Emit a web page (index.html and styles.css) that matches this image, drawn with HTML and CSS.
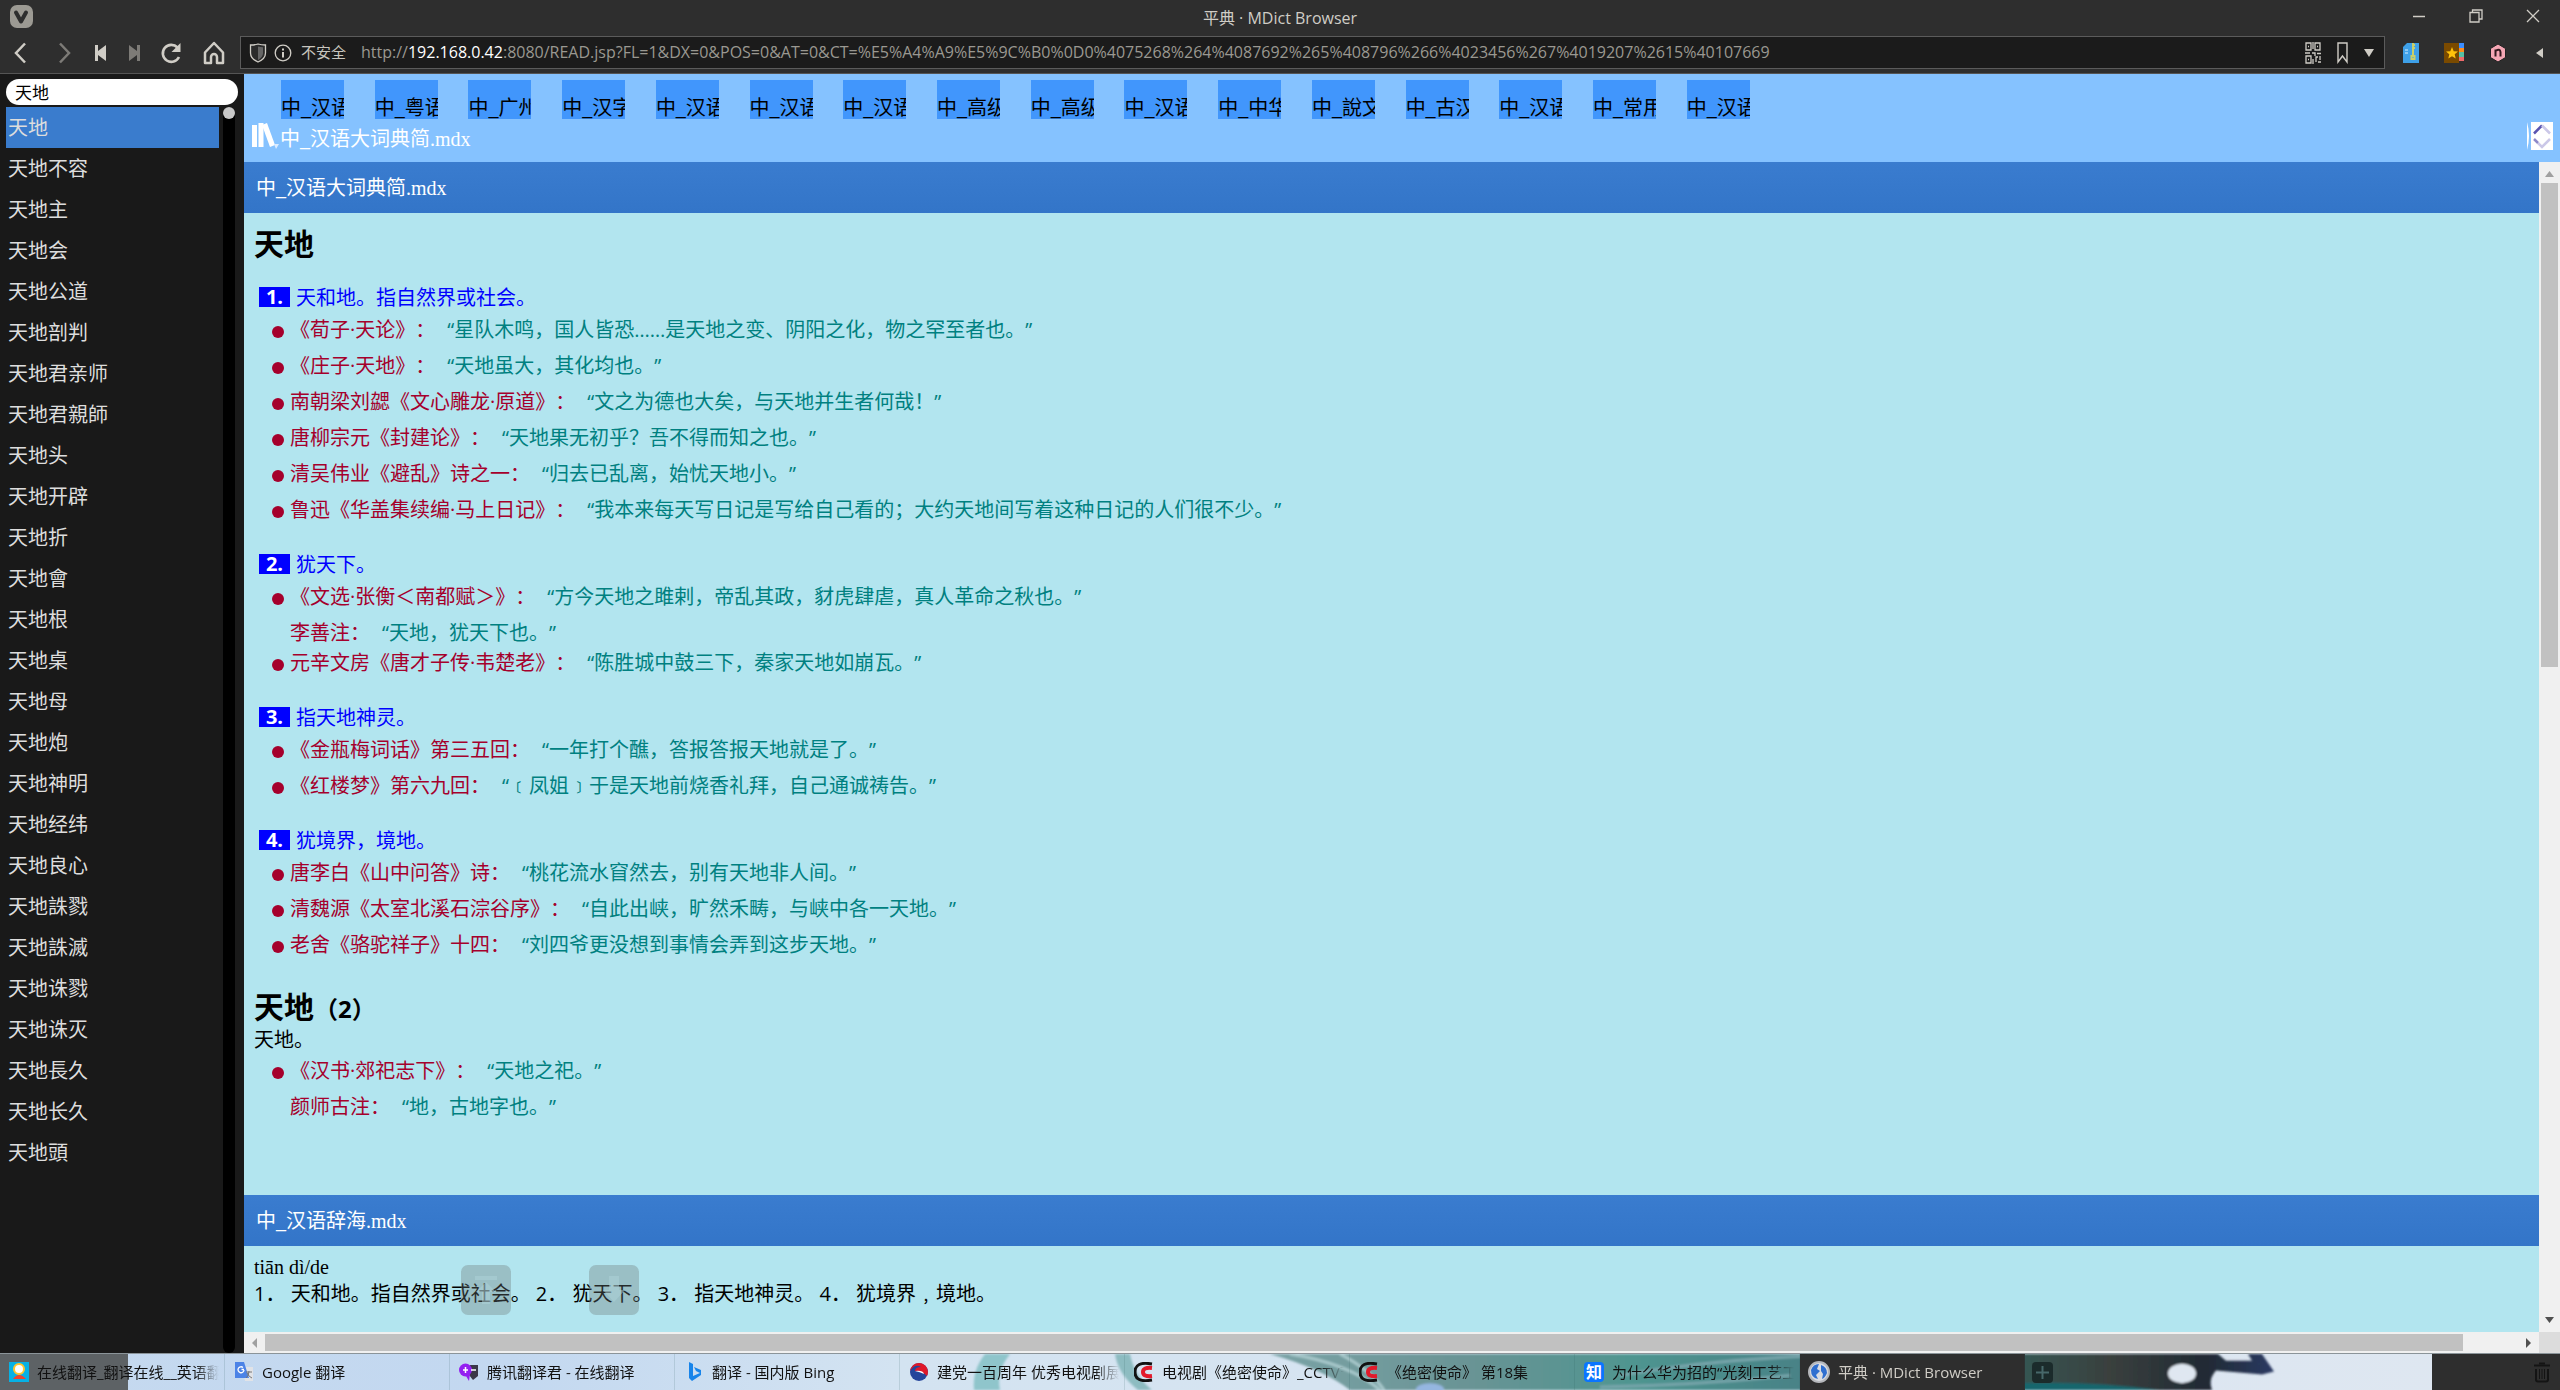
FILE: index.html
```html
<!DOCTYPE html>
<html lang="zh-CN">
<head>
<meta charset="utf-8">
<title>平典 · MDict Browser</title>
<link rel="stylesheet" href="styles.css">
</head>
<body>
<header class="titlebar">
  <button class="plain" aria-label="菜单"><svg width="23" height="23" viewBox="0 0 23 23"><rect width="23" height="23" rx="7" fill="#9c9a93"/><path d="M6 7.500l5 9 5-9" fill="none" stroke="#2e2e2e" stroke-width="4" stroke-linecap="round" stroke-linejoin="round"/></svg></button>
  <h1 class="window-title">平典 · MDict Browser</h1>
  <div class="window-buttons">
    <button class="plain" aria-label="最小化"><svg width="14" height="14" viewBox="0 0 14 14"><path d="M1 7.500h12" stroke="#d0cdc6" stroke-width="1.500"/></svg></button>
    <button class="plain" aria-label="还原"><svg width="14" height="14" viewBox="0 0 14 14" fill="none" stroke="#d0cdc6" stroke-width="1.300"><path d="M1 3.500h9v9.500H1zM3.500 3.500V1H13v9h-3"/></svg></button>
    <button class="plain" aria-label="关闭"><svg width="14" height="14" viewBox="0 0 14 14"><path d="M1 1l12 12M13 1L1 13" stroke="#d0cdc6" stroke-width="1.300"/></svg></button>
  </div>
</header>
<div class="toolbar">
  <nav class="nav-buttons">
    <button class="plain" aria-label="后退"><svg width="24" height="24" viewBox="0 0 24 24"><path d="M16 2.500L7 12l9 9.500" fill="none" stroke="#d0cdc6" stroke-width="2.500"/></svg></button>
    <button class="plain" aria-label="前进"><svg width="24" height="24" viewBox="0 0 24 24"><path d="M8 2.500L17 12l-9 9.500" fill="none" stroke="#7d7b77" stroke-width="2.500"/></svg></button>
    <button class="plain" aria-label="快退"><svg width="24" height="24" viewBox="0 0 24 24" fill="#d0cdc6"><path d="M6 4h3v6l8-6v16l-8-6v6H6z"/></svg></button>
    <button class="plain" aria-label="快进"><svg width="24" height="24" viewBox="0 0 24 24" fill="#7d7b77"><path d="M18 4h-3v6L7 4v16l8-6v6h3z"/></svg></button>
    <button class="plain" aria-label="重新加载"><svg width="24" height="24" viewBox="0 0 24 24"><path d="M18.500 6.500A8.500 8.500 0 1 0 20 16" fill="none" stroke="#d0cdc6" stroke-width="2.600"/><path d="M21.500 2v9h-9z" fill="#d0cdc6"/></svg></button>
    <button class="plain" aria-label="主页"><svg width="24" height="24" viewBox="0 0 24 24"><path d="M3 11.500L12 2l9 9.500V22h-6v-6a3 3 0 0 0-6 0v6H3z" fill="none" stroke="#d0cdc6" stroke-width="2.500" stroke-linejoin="round"/></svg></button>
  </nav>
  <div class="address">
    <svg width="18" height="20" viewBox="0 0 18 20"><path d="M1.500 2q4 0 7.500-1 3.500 1 7.500 1v8c0 5-4 7.500-7.500 9-3.500-1.500-7.500-4-7.500-9z" fill="#2b2b2b" stroke="#d0cdc6" stroke-width="1.300"/><path d="M9 3.500q2.500.7 5 .8V10c0 3.500-2.500 5.500-5 7z" fill="#666"/></svg>
    <svg width="18" height="18" viewBox="0 0 18 18"><circle cx="9" cy="9" r="7.800" fill="none" stroke="#d0cdc6" stroke-width="1.300"/><path d="M9 8v5.500M9 4.500v2" stroke="#d0cdc6" stroke-width="2"/></svg>
    <span class="insecure">不安全</span>
    <div class="url" role="textbox" aria-label="地址" contenteditable="true" spellcheck="false">http://<span class="host">192.168.0.42</span>:8080/READ.jsp?FL=1&amp;DX=0&amp;POS=0&amp;AT=0&amp;CT=%E5%A4%A9%E5%9C%B0%0D0%4075268%264%4087692%265%408796%266%4023456%267%4019207%2615%40107669</div>
    <div class="address-tools">
      <button class="plain" aria-label="二维码"><svg width="16" height="22" viewBox="0 0 16 22" fill="none" stroke="#d0cdc6" stroke-width="1.300"><path d="M1 1h5v7H1zM10 1h5v7h-5zM1 14h5v7H1zM3 4.500h1M12 4.500h1M3 17.500h1M8 0v7M0 11h5M7 11h3v3M12 11.500h4M8 17v5M11 20v-5h2M15 14v4M13 20h3"/></svg></button>
      <button class="plain" aria-label="书签"><svg width="11" height="22" viewBox="0 0 11 22"><path d="M1 1h9v19l-4.500-6L1 20z" fill="none" stroke="#d0cdc6" stroke-width="1.400"/></svg></button>
      <button class="plain" aria-label="历史"><svg width="10" height="8" viewBox="0 0 10 8"><path d="M0 0h10L5 8z" fill="#d0cdc6"/></svg></button>
    </div>
  </div>
  <div class="extensions">
    <button class="plain" aria-label="压缩"><svg width="16" height="20" viewBox="0 0 16 20"><path d="M4 0h12v20H0V4z" fill="#3ea0e8"/><path d="M10 0v14M9 2h3M9 5h3M8.500 13h3v3h-3z" stroke="#c9cf68" stroke-width="2" fill="none"/><path d="M2 7h3M2 10h3" stroke="#d9efff"/></svg></button>
    <button class="plain" aria-label="收藏"><svg width="20" height="20" viewBox="0 0 20 20"><path d="M0 0h15v20H0z" fill="#7a4a00"/><path d="M8 4l1.700 4.200 4.300.3-3.300 2.800 1 4.300L8 13.200l-3.700 2.400 1-4.300L2 8.500l4.300-.3z" fill="#ffc20a"/><path d="M15 0h5v5h-5z" fill="#3a8dff"/><path d="M15 5h5v4h-5z" fill="#ff8b1a"/><path d="M15 9h5v5h-5z" fill="#57c1a5"/><path d="M15 14h5v4h-5z" fill="#ef6a6a"/></svg></button>
    <button class="plain" aria-label="笔记"><svg width="18" height="20" viewBox="0 0 18 20"><path d="M9 1l7.500 4.500v9L9 19l-7.500-4.500v-9z" fill="#f5a6b4" stroke="#202020"/><path d="M6.500 13.500v-7M6.500 8q4.500-3 5 1v4.500" fill="none" stroke="#33191e" stroke-width="2"/></svg></button>
    <button class="plain more" aria-label="展开扩展"><svg width="7" height="10" viewBox="0 0 7 10"><path d="M7 0v10L0 5z" fill="#d0cdc6"/></svg></button>
  </div>
</div>
<main class="page">
  <aside class="sidebar">
    <input class="search" type="text" value="天地" aria-label="查词">
    <div class="word-area">
      <nav class="words">
        <a class="current" href="#">天地</a><a href="#">天地不容</a><a href="#">天地主</a><a href="#">天地会</a><a href="#">天地公道</a><a href="#">天地剖判</a><a href="#">天地君亲师</a><a href="#">天地君親師</a><a href="#">天地头</a><a href="#">天地开辟</a><a href="#">天地折</a><a href="#">天地會</a><a href="#">天地根</a><a href="#">天地桌</a><a href="#">天地母</a><a href="#">天地炮</a><a href="#">天地神明</a><a href="#">天地经纬</a><a href="#">天地良心</a><a href="#">天地誅戮</a><a href="#">天地誅滅</a><a href="#">天地诛戮</a><a href="#">天地诛灭</a><a href="#">天地長久</a><a href="#">天地长久</a><a href="#">天地頭</a>
      </nav>
      <div class="word-track"><div class="word-thumb"></div></div>
    </div>
  </aside>
  <section class="reader">
    <header class="dict-head">
      <div class="dict-list">
        <button>中_汉语</button><button>中_粤语</button><button>中_广州</button><button>中_汉字</button><button>中_汉语</button><button>中_汉语</button><button>中_汉语</button><button>中_高级</button><button>中_高级</button><button>中_汉语</button><button>中_中华</button><button>中_說文</button><button>中_古汉</button><button>中_汉语</button><button>中_常用</button><button>中_汉语</button>
      </div>
      <div class="dict-current">
        <svg width="28" height="28" viewBox="0 0 28 28"><path d="M0 3h5v22H0zM6.500 1h5v24h-5z" fill="#fff"/><path d="M10 3l5-2 8 22-5 2z" fill="#fff"/><path d="M22 22h5l-3 5z" fill="#dcecff"/></svg>
        <span class="dict-name">中_汉语大词典简.mdx</span>
        <button class="plain" aria-label="上下切换"><svg width="28" height="28" viewBox="0 0 28 28"><path d="M1 0q4 14 0 28z" fill="#fff"/><path d="M5 0h22v28H5z" fill="#fff"/><path d="M8 11.500l8-8" stroke="#5a54b0" stroke-width="2.500"/><path d="M16 3.500l8 8M12 21l4 4 8-8" fill="none" stroke="#cbc8e8" stroke-width="2.500"/><path d="M8 17l4 4" stroke="#8d88c8" stroke-width="2.500"/></svg></button>
      </div>
    </header>
    <div class="view">
      <div class="entries">
        <h2 class="bar">中_汉语大词典简.mdx</h2>
        <article class="entry">
          <h3 class="word">天地</h3>
          <section class="sense">
            <p class="meaning"><b>1.</b>天和地。指自然界或社会。</p>
            <ul>
              <li>《荀子·天论》：<q>“星队木鸣，国人皆恐……是天地之变、阴阳之化，物之罕至者也。”</q></li>
              <li>《庄子·天地》：<q>“天地虽大，其化均也。”</q></li>
              <li>南朝梁刘勰《文心雕龙·原道》：<q>“文之为德也大矣，与天地并生者何哉！”</q></li>
              <li>唐柳宗元《封建论》：<q>“天地果无初乎？吾不得而知之也。”</q></li>
              <li>清吴伟业《避乱》诗之一：<q>“归去已乱离，始忧天地小。”</q></li>
              <li>鲁迅《华盖集续编·马上日记》：<q>“我本来每天写日记是写给自己看的；大约天地间写着这种日记的人们很不少。”</q></li>
            </ul>
          </section>
          <section class="sense">
            <p class="meaning"><b>2.</b>犹天下。</p>
            <ul>
              <li>《文选·张衡＜南都赋＞》：<q>“方今天地之雎剌，帝乱其政，豺虎肆虐，真人革命之秋也。”</q></li>
              <li class="note">李善注：<q>“天地，犹天下也。”</q></li>
              <li>元辛文房《唐才子传·韦楚老》：<q>“陈胜城中鼓三下，秦家天地如崩瓦。”</q></li>
            </ul>
          </section>
          <section class="sense">
            <p class="meaning"><b>3.</b>指天地神灵。</p>
            <ul>
              <li>《金瓶梅词话》第三五回：<q>“一年打个醮，答报答报天地就是了。”</q></li>
              <li>《红楼梦》第六九回：<q>“﹝凤姐﹞于是天地前烧香礼拜，自己通诚祷告。”</q></li>
            </ul>
          </section>
          <section class="sense">
            <p class="meaning"><b>4.</b>犹境界，境地。</p>
            <ul>
              <li>唐李白《山中问答》诗：<q>“桃花流水窅然去，别有天地非人间。”</q></li>
              <li>清魏源《太室北溪石淙谷序》：<q>“自此出峡，旷然禾畴，与峡中各一天地。”</q></li>
              <li>老舍《骆驼祥子》十四：<q>“刘四爷更没想到事情会弄到这步天地。”</q></li>
            </ul>
          </section>
          <h3 class="word second">天地<small>（2）</small></h3>
          <p class="gloss">天地。</p>
          <ul>
            <li>《汉书·郊祀志下》：<q>“天地之祀。”</q></li>
            <li class="plain-note">颜师古注：<q>“地，古地字也。”</q></li>
          </ul>
        </article>
        <h2 class="bar">中_汉语辞海.mdx</h2>
        <article class="entry brief">
          <p class="pinyin">tiān dì/de</p>
          <p class="senses">1． 天和地。指自然界或社会。 2． 犹天下。 3． 指天地神灵。 4． 犹境界﹐境地。</p>
        </article>
        <div class="jump">
          <button aria-label="回到顶部"><svg width="28" height="30" viewBox="0 0 28 30" fill="#aed3da"><path d="M3 1h22v4H3zM14 7l10 10h-6v12h-8V17H4z"/></svg></button>
          <button aria-label="到底部"><svg width="28" height="30" viewBox="0 0 28 30" fill="#aed3da"><path d="M9 1h10v14h6L14 27 3 15h6z"/></svg></button>
        </div>
      </div>
      <div class="vscroll"><svg width="9" height="6" viewBox="0 0 9 6"><path d="M0 6h9L4.500 0z" fill="#a0a0a0"/></svg><div class="vthumb"></div><svg class="end" width="9" height="6" viewBox="0 0 9 6"><path d="M0 0h9L4.500 6z" fill="#505050"/></svg></div>
      <div class="hscroll"><svg width="5" height="10" viewBox="0 0 5 10"><path d="M5 0v10L0 5z" fill="#a0a0a0"/></svg><div class="hthumb"></div><svg class="end" width="5" height="10" viewBox="0 0 5 10"><path d="M0 0v10l5-5z" fill="#505050"/></svg></div>
      <div class="corner"></div>
    </div>
  </section>
</main>
<footer class="tabbar">
  <svg class="wallpaper" viewBox="0 0 2560 37" preserveAspectRatio="none">
    <defs>
      <linearGradient id="sky" x2="1" y2="0"><stop offset="0" stop-color="#c5d9ef"/><stop offset=".2" stop-color="#c3d8f0"/><stop offset=".35" stop-color="#d3e3f1"/><stop offset="1" stop-color="#dfe7f1"/></linearGradient>
      <linearGradient id="leaf" x2="1" y2="0"><stop offset="0" stop-color="#7aa3a6"/><stop offset=".35" stop-color="#6a9495"/><stop offset=".65" stop-color="#4f9590"/><stop offset="1" stop-color="#487f85"/></linearGradient>
      <linearGradient id="deep" x2="1" y2="0"><stop offset="0" stop-color="#355b58"/><stop offset=".4" stop-color="#3a403e"/><stop offset=".75" stop-color="#202a34"/><stop offset="1" stop-color="#2b3a63"/></linearGradient>
      <filter id="soft"><feGaussianBlur stdDeviation="1"/></filter>
    </defs>
    <path d="M0 0h2560v37H0z" fill="url(#sky)"/>
    <g filter="url(#soft)">
      <path d="M985 0h25q-14 18-10 37h-26q-2-20 11-37z" fill="#8fc5cb"/>
      <path d="M1115 0h15q4 22 22 37h-14q-20-16-23-37z" fill="#8dbcc1"/>
      <path d="M1270 0h560v37h-480q-28-22-80-37z" fill="url(#leaf)"/>
      <path d="M1290 0q60 10 90 37M1340 0q30 16 44 37" fill="none" stroke="#a9c9cc" stroke-width="3"/>
      <path d="M1620 22q90-16 190-20M1600 34q100-2 190-12" fill="none" stroke="#78a6ac" stroke-width="3"/>
      <ellipse cx="1430" cy="36" rx="14" ry="6" fill="#95b6e0"/>
      <path d="M2000 0H2218L2226 7H2252L2248 0H2262L2274 18L2262 21L2216 17Q2208 26 2212 37H2000z" fill="url(#deep)"/>
      <path d="M2000 31q80-5 160 6h-160z" fill="#17666d"/>
      <ellipse cx="2182" cy="20" rx="14" ry="10" fill="#dfe7f1"/>
    </g>
  </svg>
  <nav class="tabs">
    <a class="tab" href="#"><svg width="20" height="20" viewBox="0 0 20 20"><path d="M0 0h20v20H0z" fill="#07b1e5"/><circle cx="10" cy="7" r="5" fill="#fff" stroke="#ffc52e" stroke-width="2"/><path d="M4 17q6-8 13 0z" fill="#f0432e"/></svg><span>在线翻译_翻译在线__英语翻译</span></a>
    <a class="tab" href="#"><svg width="20" height="20" viewBox="0 0 20 20"><path d="M8 5h11v14H11z" fill="#e1e3e7"/><path d="M1 0h9l5 16H1z" fill="#4c83e6"/><path d="M10 7.500H7.500M10 8a3 3 0 1 1-1-2.500" fill="none" stroke="#fff" stroke-width="1.300"/><path d="M12 10h6M15 9q0 5-3 7M13 11q2 4 5 5" fill="none" stroke="#777"/></svg><span>Google 翻译</span></a>
    <a class="tab" href="#"><svg width="20" height="20" viewBox="0 0 20 20"><path d="M11 3h8v11l-5 4-4-5z" fill="#3b3848"/><circle cx="6.500" cy="8" r="6.500" fill="#9420f0"/><path d="M7 14l3 5 1-7z" fill="#9420f0"/><path d="M4 8h5M12 8h5M6.500 5v6" stroke="#fff" stroke-width="1.500"/></svg><span>腾讯翻译君 - 在线翻译</span></a>
    <a class="tab" href="#"><svg width="20" height="20" viewBox="0 0 20 20"><path d="M5 0l4 2v12l7-3-4-2-2-4 7 3v5l-9 6-3-3z" fill="#1784ea"/></svg><span>翻译 - 国内版 Bing</span></a>
    <a class="tab" href="#"><svg width="20" height="20" viewBox="0 0 20 20"><circle cx="10" cy="10" r="9" fill="#24459b"/><path d="M10 1a9 9 0 0 1 8 13Q12 8 6 9 6 5 12 5 6 1 1 9 3 1 10 1z" fill="#e01829"/><path d="M6 9q8-1 9 3-4-2-9-3z" fill="#fff"/></svg><span>建党一百周年 优秀电视剧展播</span></a>
    <a class="tab" href="#"><svg width="20" height="20" viewBox="0 0 20 20" fill="none"><path d="M18 2q-17-3-17 8t17 8" stroke="#111" stroke-width="3"/><path d="M18 6q-9-1-9 4t9 4" stroke="#e21a2b" stroke-width="4"/></svg><span>电视剧《绝密使命》_CCTV节目</span></a>
    <a class="tab" href="#"><svg width="20" height="20" viewBox="0 0 20 20" fill="none"><path d="M18 2q-17-3-17 8t17 8" stroke="#111" stroke-width="3"/><path d="M18 6q-9-1-9 4t9 4" stroke="#e21a2b" stroke-width="4"/></svg><span>《绝密使命》 第18集</span></a>
    <a class="tab" href="#"><i class="zhi">知</i><span>为什么华为招的“光刻工艺工程</span></a>
    <a class="tab active" href="#"><svg width="22" height="22" viewBox="0 0 22 22"><circle cx="11" cy="11" r="10" fill="#d9dce2" stroke="#b5b7bb" stroke-width="2"/><path d="M3 9q2-6 8-6l-2 5 3 2-4 4 2 4q-7-1-7-9zM13 4q6 2 6 8-2 5-5 6l1-5-2-3z" fill="#2f6fd0"/></svg><span>平典 · MDict Browser</span></a>
    <button class="plain add" aria-label="新建标签页"><svg width="21" height="21" viewBox="0 0 21 21"><rect width="21" height="21" rx="4" fill="#1b2b2b"/><path d="M10.500 4v13M4 10.500h13" stroke="#47686a" stroke-width="2"/></svg></button>
  </nav>
  <div class="trash"><button class="plain" aria-label="已关闭的标签页"><svg width="16" height="21" viewBox="0 0 16 21" fill="none" stroke="#141414"><path d="M0 3.500h16" stroke-width="2"/><path d="M5 1.500h6" stroke-width="2"/><path d="M2 7v10.500q0 2 2 2h8q2 0 2-2V7" stroke-width="2"/><path d="M5.500 7v10M8 7v10M10.500 7v10"/></svg></button></div>
</footer>
</body>
</html>
```
FILE: styles.css
```css
* { box-sizing: border-box; }
html { height: 100%; overflow: hidden; }
body {
  margin: 0;
  height: 100%;
  display: flex;
  flex-direction: column;
  overflow: hidden;
  background: #2e2e2e;
  font: 20px/27px "Open Sans", "Noto Sans CJK SC", sans-serif;
  text-spacing-trim: space-all;
}
svg { display: block; flex: none; }
h1, h2, h3, p, ul { margin: 0; padding: 0; }
a { color: inherit; text-decoration: none; }
button { font: inherit; }
.plain { border: 0; padding: 0; background: none; }

/* browser window */
.titlebar {
  height: 36px;
  flex: none;
  display: grid;
  grid-template-columns: 1fr auto 1fr;
  align-items: center;
  padding: 0 20px 4px 10px;
  color: #d0cdc6;
}
.window-title { font-size: 16px; font-weight: 400; line-height: 20px; padding: 4px 0 0 10px; }
.window-buttons { display: flex; gap: 43px; justify-content: flex-end; }
.toolbar {
  height: 38px;
  flex: none;
  display: flex;
  border-bottom: 1px solid #555;
}
.nav-buttons {
  display: grid;
  grid-template-columns: 42px 44px 30px 36px 38px 48px;
  justify-items: center;
  align-items: start;
  width: 240px;
  padding-top: 5px;
}
.address {
  flex: 1;
  height: 33px;
  display: flex;
  align-items: center;
  gap: 7px;
  padding: 0 10px 0 8px;
  background: #1b1b1b;
  border: 1px solid #5b5b5b;
  color: #9a9891;
  font-size: 16px;
}
.insecure { color: #c8c5be; font-size: 15px; margin: 0 8px 0 2px; }
.url { flex: 1; outline: 0; white-space: nowrap; overflow: hidden; }
.host { color: #fff; }
.address-tools { display: flex; align-items: center; gap: 16px; }
.extensions { display: flex; align-items: center; gap: 25px; padding: 0 17px 4px 18px; }
.more { padding-left: 4px; }
.page { flex: 1; min-height: 0; display: flex; }

/* word list */
.sidebar { width: 244px; flex: none; padding: 5px 6px 0; background: #191919; display: flex; flex-direction: column; }
.search {
  height: 26px;
  width: 100%;
  flex: none;
  border: 0;
  border-radius: 13px;
  padding: 0 9px;
  background: #fff;
  color: #000;
  font: 17px/26px "Noto Sans CJK SC", sans-serif;
}
.word-area { flex: 1; min-height: 0; display: flex; gap: 4px; padding: 2px 3px 0 0; }
.words { flex: 1; color: #ddd; }
.words a { display: block; height: 41px; line-height: 41px; padding-left: 2px; }
.words .current { background: #3a7ccd; }
.word-track { width: 12px; background: #000; border-radius: 6px; }
.word-thumb { height: 12px; border-radius: 6px; background: #c8c8c8; }

/* reader */
.reader { flex: 1; min-width: 0; display: flex; flex-direction: column; }
.dict-head {
  flex: none;
  height: 88px;
  padding: 6px 6px 0 8px;
  background: #85c2ff;
  font-family: "Liberation Serif", "Noto Sans CJK SC", serif;
}
.dict-list { display: flex; justify-content: space-between; max-width: 1498px; padding-left: 29px; }
.dict-list button {
  width: 63px;
  height: 39px;
  padding: 15px 0 0;
  border: 0;
  overflow: hidden;
  text-align: left;
  white-space: nowrap;
  line-height: 26px;
  background: #4196fc;
}
.dict-current { display: flex; align-items: flex-start; padding-top: 3px; color: #fff; }
.dict-name { flex: 1; line-height: 34px; }
.view {
  flex: 1;
  min-height: 0;
  display: grid;
  grid-template-columns: 1fr 21px;
  grid-template-rows: 1fr 21px;
}
.entries { position: relative; min-height: 0; overflow: hidden; background: #b2e5ef; }
.bar {
  height: 51px;
  padding-left: 12px;
  color: #fff;
  background: linear-gradient(#3a7ccf, #3375c8);
  font: 400 20px/53px "Liberation Serif", "Noto Sans CJK SC", serif;
}
.entry { padding: 11px 10px 70px; }
.word { font-size: 30px; line-height: 40px; font-weight: 700; }
.word small { font-size: 24px; }
.sense { padding-top: 20px; }
.sense + .sense { padding-top: 23px; }
.meaning { display: flex; align-items: center; gap: 6px; padding-left: 5px; height: 26px; color: #00f; }
.meaning b { width: 31px; line-height: 20px; text-align: center; color: #fff; background: #00f; }
.entry ul { list-style: none; padding: 2px 0 0 36px; color: #a5002c; }
.entry li { position: relative; height: 36px; line-height: 36px; white-space: nowrap; }
.entry li::before {
  content: "";
  position: absolute;
  left: -18px;
  top: 14px;
  width: 12px;
  height: 12px;
  border-radius: 50%;
  background: #a5002c;
}
.entry .note { height: 30px; }
.entry .note::before, .entry .plain-note::before { display: none; }
.entry q { quotes: none; margin-left: 12px; color: #008080; }
.word.second { padding-top: 24px; }
.gloss { line-height: 22px; }
.entry.brief { padding: 8px 10px; }
.pinyin { font-family: "Liberation Serif", serif; line-height: 26px; }
.jump { position: absolute; left: 217px; bottom: 17px; display: flex; gap: 78px; }
.jump button { width: 50px; height: 50px; border: 0; border-radius: 7px; padding: 10px 11px; background: rgba(110, 120, 120, .35); }
.jump svg { opacity: .5; }

/* scroll bars */
.vscroll { display: flex; flex-direction: column; align-items: center; padding: 9px 0; background: #f0f0f0; }
.vthumb { width: 17px; height: 42%; margin-top: 6px; background: #c1c1c1; }
.vscroll .end { margin-top: auto; }
.hscroll { display: flex; align-items: center; padding: 0 8px; background: #f0f0f0; }
.hthumb { flex: 0 1 2198px; height: 17px; margin: 0 60px 0 8px; background: #c1c1c1; }
.hscroll .end { margin-left: auto; }
.corner { background: #dcdcdc; }

/* tab bar */
.tabbar { position: relative; height: 37px; flex: none; display: flex; overflow: hidden; border-top: 1px solid #8b9499; }
.wallpaper { position: absolute; inset: 0; width: 100%; height: 100%; }
.tabs { position: relative; flex: 1; min-width: 0; display: flex; }
.tab {
  flex: 0 1 225px;
  min-width: 0;
  display: flex;
  align-items: center;
  gap: 8px;
  padding: 0 5px 0 9px;
  border-right: 1px solid rgba(40, 90, 90, .15);
  font-size: 15px;
  color: #111;
}
.tab span {
  flex: 1;
  overflow: hidden;
  white-space: nowrap;
  mask-image: linear-gradient(90deg, #000 calc(100% - 24px), transparent);
}
.tab:first-child { background: linear-gradient(#5d6265, #5d6265) 0 0 / 128px 100% no-repeat; }
.tab.active { background: #2e2e2e; color: #d0cdc6; padding-left: 8px; }
.zhi { width: 20px; height: 20px; border-radius: 4px; background: #0a75ff; color: #fff; font-style: normal; font-size: 16px; font-weight: 700; line-height: 20px; text-align: center; }
.add { padding: 0 7px; }
.trash { position: relative; width: 128px; background: #2e2e2e; display: flex; justify-content: flex-end; align-items: center; padding-right: 10px; }
```
